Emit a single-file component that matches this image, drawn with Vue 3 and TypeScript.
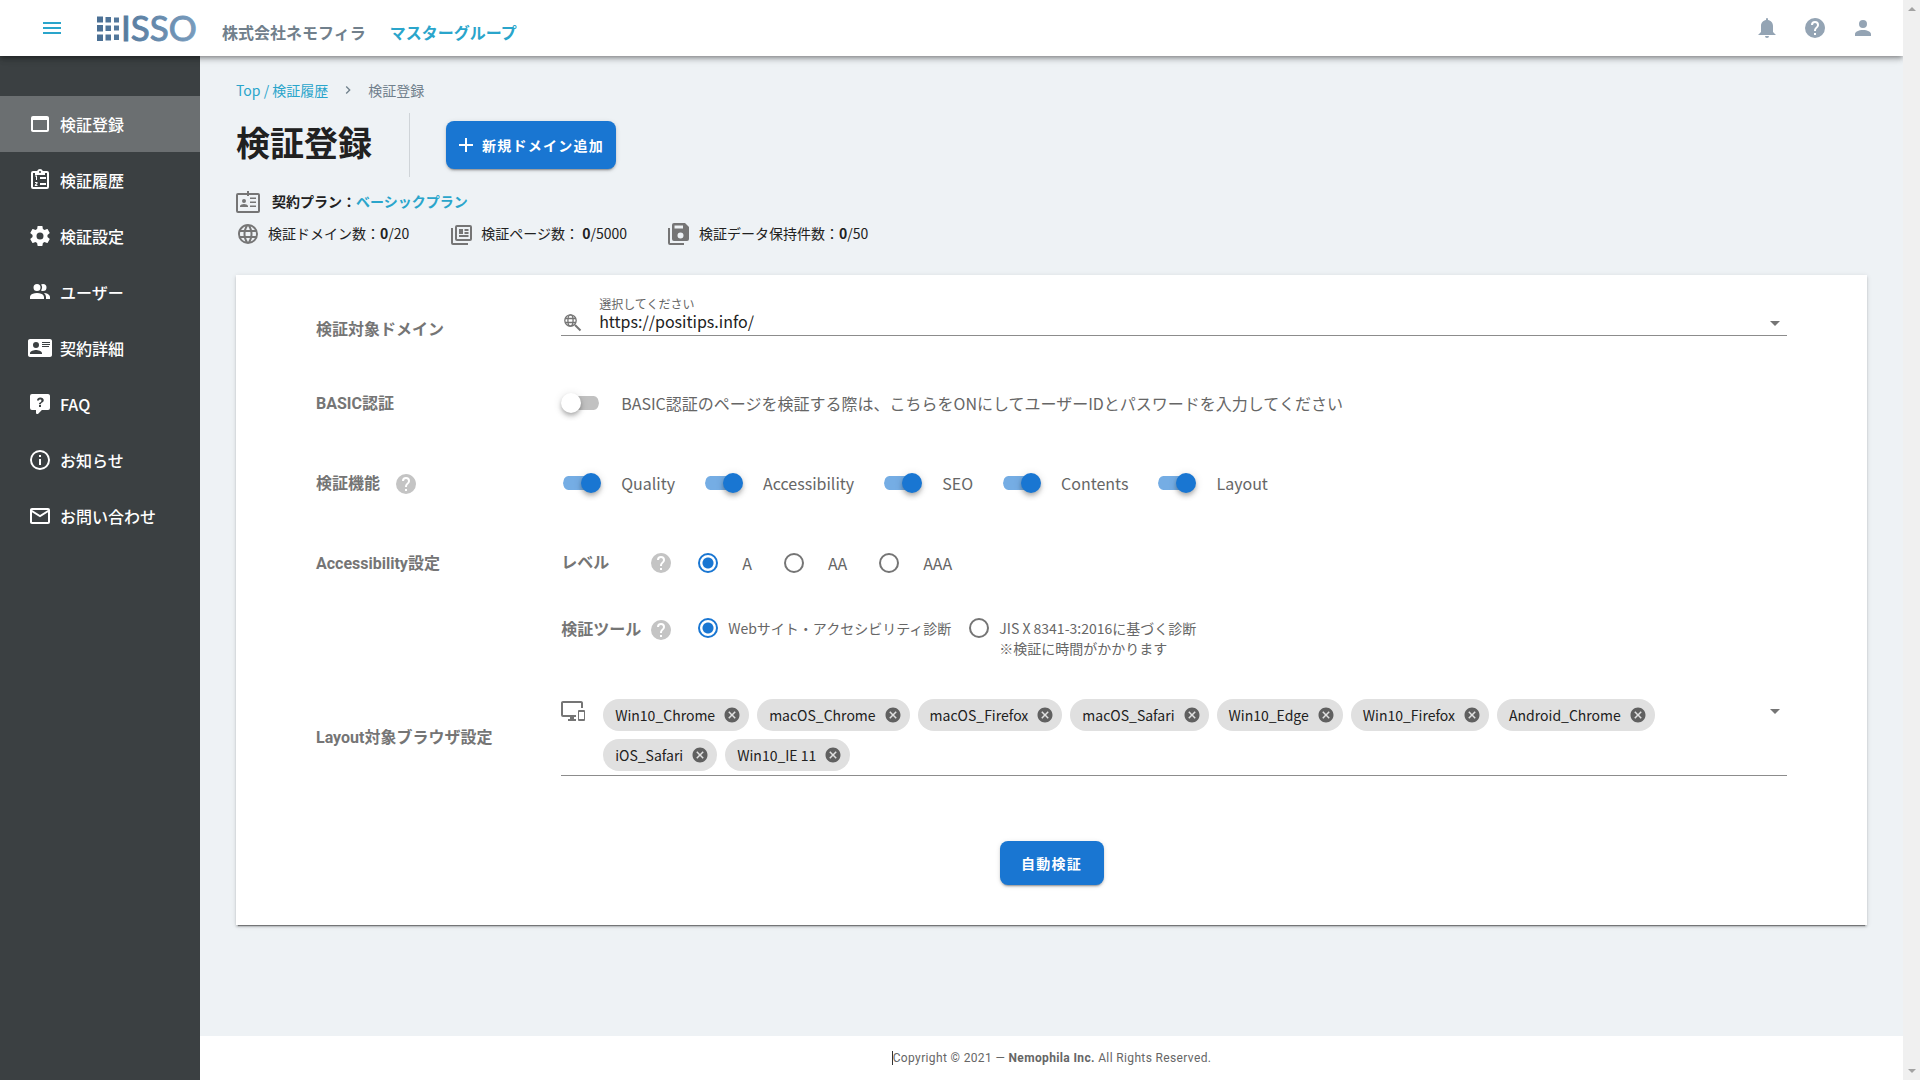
<script setup lang="ts">
import { ref } from 'vue'

interface NavItem {
  label: string
  icon: string
}

const navItems: NavItem[] = [
  { label: '検証登録', icon: 'M19,4C20.11,4 21,4.9 21,6V18A2,2 0 0,1 19,20H5C3.89,20 3,19.1 3,18V6A2,2 0 0,1 5,4H19M19,18V8H5V18H19Z' },
  { label: '検証履歴', icon: 'M19,3H14.82C14.4,1.84 13.3,1 12,1C10.7,1 9.6,1.84 9.18,3H5A2,2 0 0,0 3,5V19A2,2 0 0,0 5,21H19A2,2 0 0,0 21,19V5A2,2 0 0,0 19,3M12,3A1,1 0 1,1 12,5A1,1 0 0,1 12,3M19,19H5V5H7V7H17V5H19V19M12,9H18V11H12V9M12,15H18V17H12V15M8,12V8.5H7V7.5H9V12H8M7,14H9.5V15.5L8.2,17H9.5V18H6.8V17L8.5,15H7V14Z' },
  { label: '検証設定', icon: 'M12,15.5A3.5,3.5 0 0,1 8.5,12A3.5,3.5 0 0,1 12,8.5A3.5,3.5 0 0,1 15.5,12A3.5,3.5 0 0,1 12,15.5M19.43,12.97C19.47,12.65 19.5,12.33 19.5,12C19.5,11.67 19.47,11.34 19.43,11L21.54,9.37C21.73,9.22 21.78,8.95 21.66,8.73L19.66,5.27C19.54,5.05 19.27,4.96 19.05,5.05L16.56,6.05C16.04,5.66 15.5,5.32 14.87,5.07L14.5,2.42C14.46,2.18 14.25,2 14,2H10C9.75,2 9.54,2.18 9.5,2.42L9.13,5.07C8.5,5.32 7.96,5.66 7.44,6.05L4.95,5.05C4.73,4.96 4.46,5.05 4.34,5.27L2.34,8.73C2.21,8.95 2.27,9.22 2.46,9.37L4.57,11C4.53,11.34 4.5,11.67 4.5,12C4.5,12.33 4.53,12.65 4.57,12.97L2.46,14.63C2.27,14.78 2.21,15.05 2.34,15.27L4.34,18.73C4.46,18.95 4.73,19.03 4.95,18.95L7.44,17.94C7.96,18.34 8.5,18.68 9.13,18.93L9.5,21.58C9.54,21.82 9.75,22 10,22H14C14.25,22 14.46,21.82 14.5,21.58L14.87,18.93C15.5,18.67 16.04,18.34 16.56,17.94L19.05,18.95C19.27,19.03 19.54,18.95 19.66,18.73L21.66,15.27C21.78,15.05 21.73,14.78 21.54,14.63L19.43,12.97Z' },
  { label: 'ユーザー', icon: 'M16 17V19H2V17S2 13 9 13 16 17 16 17M12.5 7.5A3.5 3.5 0 1 0 9 11A3.5 3.5 0 0 0 12.5 7.5M15.94 13A5.32 5.32 0 0 1 18 17V19H22V17S22 13.37 15.94 13M15 4A3.39 3.39 0 0 0 13.07 4.59A5 5 0 0 1 13.07 10.41A3.39 3.39 0 0 0 15 11A3.5 3.5 0 0 0 15 4Z' },
  { label: '契約詳細', icon: 'M2,3H22C23.05,3 24,3.95 24,5V19C24,20.05 23.05,21 22,21H2C0.95,21 0,20.05 0,19V5C0,3.95 0.95,3 2,3M14,6V7H22V6H14M14,8V9H21.5L22,9V8H14M14,10V11H21V10H14M8,13.91C6,13.91 2,15 2,17V18H14V17C14,15 10,13.91 8,13.91M8,6A3,3 0 0,0 5,9A3,3 0 0,0 8,12A3,3 0 0,0 11,9A3,3 0 0,0 8,6Z' },
  { label: 'FAQ', icon: 'M4,2A2,2 0 0,0 2,4V16A2,2 0 0,0 4,18H8V21A1,1 0 0,0 9,22H9.5V22C9.75,22 10,21.9 10.2,21.71L13.9,18H20A2,2 0 0,0 22,16V4C22,2.89 21.1,2 20,2H4M12.19,5.5C13.3,5.5 14.18,5.75 14.81,6.26C15.44,6.76 15.75,7.44 15.75,8.29C15.75,8.83 15.57,9.33 15.2,9.79C14.84,10.25 14.37,10.61 13.79,10.87C13.46,11.06 13.24,11.25 13.13,11.45C13.02,11.65 12.96,11.9 12.96,12.2H10.96C10.96,11.67 11.07,11.3 11.27,11.06C11.48,10.83 11.85,10.55 12.4,10.23C12.72,10.06 12.97,9.8 13.15,9.5C13.31,9.25 13.39,8.95 13.39,8.61C13.39,8.26 13.28,8 13.08,7.77C12.87,7.58 12.58,7.5 12.2,7.5C11.88,7.5 11.6,7.57 11.37,7.74C11.15,7.91 11,8.16 11,8.5H9.04C8.96,7.53 9.3,6.77 10,6.25C10.5,5.75 11.29,5.5 12.19,5.5M11,13H13V15H11V13Z' },
  { label: 'お知らせ', icon: 'M11,9H13V7H11M12,20C7.59,20 4,16.41 4,12C4,7.59 7.59,4 12,4C16.41,4 20,7.59 20,12C20,16.41 16.41,20 12,20M12,2A10,10 0 0,0 2,12A10,10 0 0,0 12,22A10,10 0 0,0 22,12A10,10 0 0,0 12,2M11,17H13V11H11V17Z' },
  { label: 'お問い合わせ', icon: 'M4,4H20A2,2 0 0,1 22,6V18A2,2 0 0,1 20,20H4C2.89,20 2,19.1 2,18V6C2,4.89 2.89,4 4,4M12,11L20,6H4L12,11M4,18H20V8.37L12,13.36L4,8.37V18Z' },
]
const activeNav = ref(0)

const iconHelp =
  'M15.07,11.25L14.17,12.17C13.45,12.89 13,13.5 13,15H11V14.5C11,13.39 11.45,12.39 12.17,11.67L13.41,10.41C13.78,10.05 14,9.55 14,9C14,7.89 13.1,7 12,7A2,2 0 0,0 10,9H8A4,4 0 0,1 12,5A4,4 0 0,1 16,9C16,9.88 15.64,10.67 15.07,11.25M13,19H11V17H13M12,2A10,10 0 0,0 2,12A10,10 0 0,0 12,22A10,10 0 0,0 22,12C22,6.47 17.5,2 12,2Z'
const iconClose =
  'M12,2C17.53,2 22,6.47 22,12C22,17.53 17.53,22 12,22C6.47,22 2,17.53 2,12C2,6.47 6.47,2 12,2M15.59,7L12,10.59L8.41,7L7,8.41L10.59,12L7,15.59L8.41,17L12,13.41L15.59,17L17,15.59L13.41,12L17,8.41L15.59,7Z'

const domain = ref('https://positips.info/')
const basicAuth = ref(false)
const features = ref([
  { name: 'Quality', on: true },
  { name: 'Accessibility', on: true },
  { name: 'SEO', on: true },
  { name: 'Contents', on: true },
  { name: 'Layout', on: true },
])
const levels = ['A', 'AA', 'AAA']
const level = ref('A')
const tool = ref('web')
const browsers = ref([
  'Win10_Chrome', 'macOS_Chrome', 'macOS_Firefox', 'macOS_Safari', 'Win10_Edge',
  'Win10_Firefox', 'Android_Chrome', 'iOS_Safari', 'Win10_IE 11',
])

function removeBrowser(name: string) {
  browsers.value = browsers.value.filter((b) => b !== name)
}
</script>

<template>
  <div class="window">
    <div class="app">
      <header class="topbar">
        <button class="icon-btn menu" type="button" aria-label="メニュー">
          <svg viewBox="0 0 24 24"><path d="M3,6H21V8H3V6M3,11H21V13H3V11M3,16H21V18H3V16Z" /></svg>
        </button>
        <svg class="logo" viewBox="0 -8 104 48" role="img" aria-label="ISSO">
          <defs>
            <linearGradient id="brand" gradientUnits="userSpaceOnUse" x1="0" y1="0" x2="102" y2="0">
              <stop offset="0" stop-color="#4a6f94" />
              <stop offset="1" stop-color="#7a9dbe" />
            </linearGradient>
          </defs>
          <g fill="url(#brand)">
            <path d="M0,4.500h6v6h-6zM8.500,5h5.500v5.500h-5.500zM17,5.500h5v5h-5zM0,13h6v6.500h-6zM8.500,13.500h5.500v5.500h-5.500zM17,13.500h5v5h-5zM0,22.500h6v6.500h-6zM8.500,22.500h5.500v6h-5.500zM17,22.500h5v5.500h-5z" />
            <text class="logo-text" x="24" y="29" stroke="url(#brand)">ISSO</text>
          </g>
        </svg>
        <div class="names">
          <span class="company">株式会社ネモフィラ</span>
          <span class="group">マスターグループ</span>
        </div>
        <div class="tools">
          <button class="icon-btn" type="button" aria-label="通知">
            <svg viewBox="0 0 24 24"><path d="M14,20A2,2 0 0,1 12,22A2,2 0 0,1 10,20H14M12,2A1,1 0 0,1 13,3V4.08C15.84,4.56 18,7.03 18,10V16L21,19H3L6,16V10C6,7.03 8.16,4.56 11,4.08V3A1,1 0 0,1 12,2Z" /></svg>
          </button>
          <button class="icon-btn" type="button" aria-label="ヘルプ">
            <svg viewBox="0 0 24 24"><path :d="iconHelp" /></svg>
          </button>
          <button class="icon-btn" type="button" aria-label="アカウント">
            <svg viewBox="0 0 24 24"><path d="M12,4A4,4 0 0,1 16,8A4,4 0 0,1 12,12A4,4 0 0,1 8,8A4,4 0 0,1 12,4M12,14C16.42,14 20,15.79 20,18V20H4V18C4,15.79 7.58,14 12,14Z" /></svg>
          </button>
        </div>
      </header>

      <div class="body">
        <nav class="sidebar">
          <a
            v-for="(item, i) in navItems"
            :key="item.label"
            href="#"
            class="nav-item"
            :class="{ active: i === activeNav }"
            @click.prevent="activeNav = i"
          >
            <svg viewBox="0 0 24 24"><path :d="item.icon" /></svg>
            <span>{{ item.label }}</span>
          </a>
        </nav>

        <div class="content">
          <main class="main">
            <div class="crumbs">
              <a href="#">Top / 検証履歴</a>
              <svg viewBox="0 0 24 24"><path d="M8.59,16.58L13.17,12L8.59,7.41L10,6L16,12L10,18L8.59,16.58Z" /></svg>
              <span>検証登録</span>
            </div>

            <div class="heading">
              <h1>検証登録</h1>
              <button class="primary add" type="button">
                <svg viewBox="0 0 24 24"><path d="M19,13H13V19H11V13H5V11H11V5H13V11H19V13Z" /></svg>
                <span>新規ドメイン追加</span>
              </button>
            </div>

            <div class="plan">
              <svg viewBox="0 0 24 24"><path d="M22,3H13V1H11V3H2A2,2 0 0,0 0,5V21A2,2 0 0,0 2,23H22A2,2 0 0,0 24,21V5A2,2 0 0,0 22,3M22,21H2V5H11V6H13V5H22V21M14,17V15.500H20V17H14M14,13V11.500H20V13H14M14,9V7.500H20V9H14M8,9A2,2 0 0,1 10,11A2,2 0 0,1 8,13A2,2 0 0,1 6,11A2,2 0 0,1 8,9M12,17V16C12,14.700 9.300,14 8,14C6.700,14 4,14.700 4,16V17H12Z" /></svg>
              <div class="plan-text">
                <span>契約プラン：</span>
                <a href="#">ベーシックプラン</a>
              </div>
            </div>
            <div class="stats">
              <div class="stat">
                <svg viewBox="0 0 24 24"><path d="M16.36,14C16.44,13.34 16.5,12.68 16.5,12C16.5,11.32 16.44,10.66 16.36,10H19.74C19.9,10.64 20,11.31 20,12C20,12.69 19.9,13.36 19.74,14M14.59,19.56C15.19,18.45 15.65,17.25 15.97,16H18.92C17.96,17.65 16.43,18.93 14.59,19.56M14.34,14H9.66C9.56,13.34 9.5,12.68 9.5,12C9.5,11.32 9.56,10.65 9.66,10H14.34C14.43,10.65 14.5,11.32 14.5,12C14.5,12.68 14.43,13.34 14.34,14M12,19.96C11.17,18.76 10.5,17.43 10.09,16H13.91C13.5,17.43 12.83,18.76 12,19.96M8,8H5.08C6.03,6.34 7.57,5.06 9.4,4.44C8.8,5.55 8.35,6.75 8,8M5.08,16H8C8.35,17.25 8.8,18.45 9.4,19.56C7.57,18.93 6.03,17.65 5.08,16M4.26,14C4.1,13.36 4,12.69 4,12C4,11.31 4.1,10.64 4.26,10H7.64C7.56,10.66 7.5,11.32 7.5,12C7.5,12.68 7.56,13.34 7.64,14M12,4.03C12.83,5.23 13.5,6.57 13.91,8H10.09C10.5,6.57 11.17,5.23 12,4.03M18.92,8H15.97C15.65,6.75 15.19,5.55 14.59,4.44C16.43,5.07 17.96,6.34 18.92,8M12,2C6.47,2 2,6.5 2,12A10,10 0 0,0 12,22A10,10 0 0,0 22,12A10,10 0 0,0 12,2Z" /></svg>
                <span>検証ドメイン数：<b>0</b>/20</span>
              </div>
              <div class="stat">
                <svg viewBox="0 0 24 24"><path d="M21,3H8A2,2 0 0,0 6,5V17A2,2 0 0,0 8,19H21A2,2 0 0,0 23,17V5A2,2 0 0,0 21,3M21,17H8V5H21V17M2,6H4V21H19V23H4A2,2 0 0,1 2,21V6M10,7H14V12H10V7M15.500,7H19.500V9H15.500V7M15.500,10H19.500V12H15.500V10M10,13H19.500V15H10V13Z" /></svg>
                <span>検証ページ数： <b>0</b>/5000</span>
              </div>
              <div class="stat">
                <svg viewBox="0 0 24 24"><path d="M18,1H7A2,2 0 0,0 5,3V17A2,2 0 0,0 7,19H20A2,2 0 0,0 22,17V5L18,1M16,6.500H7.500V3.500H16V6.500M13.500,16.500A3,3 0 1,1 16.500,13.500A3,3 0 0,1 13.500,16.500M1,6H3V21H17V23H3A2,2 0 0,1 1,21V6Z" /></svg>
                <span>検証データ保持件数：<b>0</b>/50</span>
              </div>
            </div>

            <form class="card" @submit.prevent>
              <div class="row row-domain">
                <label class="row-label" for="domain">検証対象ドメイン</label>
                <div class="select-field">
                  <svg class="search-icon" viewBox="0 0 24 24">
                    <circle cx="9.500" cy="9.500" r="5.700" />
                    <ellipse cx="9.500" cy="9.500" rx="2.600" ry="5.700" />
                    <path d="M4.200,7.500H14.800M4.200,11.500H14.800" />
                    <path class="handle" d="M14,14L19.500,19.500" />
                  </svg>
                  <div class="select-stack">
                    <label class="hint" for="domain">選択してください</label>
                    <select id="domain" v-model="domain">
                      <option>https://positips.info/</option>
                    </select>
                  </div>
                  <svg class="arrow" viewBox="0 0 24 24"><path d="M7,10L12,15L17,10H7Z" /></svg>
                </div>
              </div>

              <div class="row">
                <span class="row-label">BASIC認証</span>
                <div class="options">
                  <label class="switch">
                    <input v-model="basicAuth" type="checkbox" />
                    <span>BASIC認証のページを検証する際は、こちらをONにしてユーザーIDとパスワードを入力してください</span>
                  </label>
                </div>
              </div>

              <div class="row">
                <span class="row-label">検証機能 <svg class="help" viewBox="0 0 24 24"><path :d="iconHelp" /></svg></span>
                <div class="options">
                  <label v-for="f in features" :key="f.name" class="switch">
                    <input v-model="f.on" type="checkbox" />
                    <span>{{ f.name }}</span>
                  </label>
                </div>
              </div>

              <div class="row">
                <span class="row-label">Accessibility設定</span>
                <div class="options">
                  <span class="sub-label">レベル</span>
                  <svg class="help" viewBox="0 0 24 24"><path :d="iconHelp" /></svg>
                  <label v-for="l in levels" :key="l" class="radio">
                    <input v-model="level" type="radio" name="level" :value="l" />
                    <span>{{ l }}</span>
                  </label>
                </div>
              </div>

              <div class="row row-tool">
                <span></span>
                <div class="options tool">
                  <span class="sub-label">検証ツール</span>
                  <svg class="help" viewBox="0 0 24 24"><path :d="iconHelp" /></svg>
                  <label class="radio">
                    <input v-model="tool" type="radio" name="tool" value="web" />
                    <span>Webサイト・アクセシビリティ診断</span>
                  </label>
                  <label class="radio">
                    <input v-model="tool" type="radio" name="tool" value="jis" />
                    <span>JIS X 8341-3:2016に基づく診断<br />※検証に時間がかかります</span>
                  </label>
                </div>
              </div>

              <div class="row row-layout">
                <span class="row-label">Layout対象ブラウザ設定</span>
                <div class="chips-field">
                  <svg class="devices" viewBox="0 0 24 24"><path d="M23,11H18A1,1 0 0,0 17,12V21A1,1 0 0,0 18,22H23A1,1 0 0,0 24,21V12A1,1 0 0,0 23,11M23,20H18V13H23V20M20,2H2C0.89,2 0,2.89 0,4V16A2,2 0 0,0 2,18H9V20H7V22H15V20H13V18H15V16H2V4H20V9H22V4C22,2.89 21.1,2 20,2Z" /></svg>
                  <ul class="chips">
                    <li v-for="b in browsers" :key="b" class="chip">
                      <span>{{ b }}</span>
                      <button type="button" :aria-label="b + 'を削除'" @click="removeBrowser(b)">
                        <svg viewBox="0 0 24 24"><path :d="iconClose" /></svg>
                      </button>
                    </li>
                  </ul>
                  <svg class="arrow" viewBox="0 0 24 24"><path d="M7,10L12,15L17,10H7Z" /></svg>
                </div>
              </div>

              <button class="primary submit" type="submit">自動検証</button>
            </form>
          </main>

          <footer class="footer">
            <span class="copyright">Copyright © 2021 — <b>Nemophila Inc.</b> All Rights Reserved.</span>
          </footer>
        </div>
      </div>
    </div>

    <div class="scrollbar" aria-hidden="true">
      <svg viewBox="0 0 8 4"><path d="M4,0L8,4H0Z" /></svg>
      <svg viewBox="0 0 8 4"><path d="M0,0H8L4,4Z" /></svg>
    </div>
  </div>
</template>

<style>
html {
  scrollbar-width: none;
}
body {
  margin: 0;
}
</style>

<style scoped>
* {
  box-sizing: border-box;
}
.window {
  display: flex;
  min-height: 100vh;
  font-family: "Noto Sans CJK JP", sans-serif;
  font-size: 16px;
  line-height: 24px;
  color: #212121;
}
.app {
  flex: 1;
  min-width: 0;
  display: flex;
  flex-direction: column;
}
svg {
  display: block;
  flex: none;
  width: 24px;
  height: 24px;
  fill: currentColor;
}
a {
  color: #2aa5cb;
  text-decoration: none;
}
button {
  border: 0;
  padding: 0;
  background: none;
  font: inherit;
  cursor: pointer;
}

/* header */
.topbar {
  position: relative;
  z-index: 1;
  display: flex;
  align-items: center;
  height: 56px;
  padding: 0 28px 0 40px;
  background: #fff;
  box-shadow: 0 2px 4px -1px rgba(0, 0, 0, 0.3), 0 4px 5px rgba(0, 0, 0, 0.14), 0 1px 10px rgba(0, 0, 0, 0.12);
}
.icon-btn {
  color: #94a4b4;
}
.menu {
  color: #2aa5cb;
}
.logo {
  width: 104px;
  height: 48px;
  margin: 0 21px 0 33px;
}
.logo-text {
  font-family: Lato, sans-serif;
  font-size: 35px;
}
.names {
  display: flex;
  gap: 24px;
  padding-top: 8px;
  font-weight: 700;
}
.company {
  color: #71808c;
}
.group {
  color: #2aa5cb;
}
.tools {
  display: flex;
  gap: 24px;
  margin-left: auto;
}

.body {
  flex: 1;
  display: flex;
}

/* sidebar */
.sidebar {
  width: 200px;
  padding-top: 40px;
  background: #3b4042;
}
.nav-item {
  display: flex;
  align-items: center;
  gap: 8px;
  height: 56px;
  padding-left: 28px;
  color: #fff;
  font-weight: 500;
}
.nav-item.active {
  background: #6b6f71;
}

/* page */
.content {
  flex: 1;
  min-width: 0;
  display: flex;
  flex-direction: column;
  background: #eef2f5;
}
.main {
  flex: 1;
  padding: 22px 36px 36px;
}
.crumbs {
  display: flex;
  align-items: center;
  gap: 12px;
  font-size: 14px;
  color: #71808c;
}
.crumbs svg {
  width: 16px;
  height: 16px;
}
.heading {
  display: flex;
  align-items: center;
  height: 64px;
  margin-top: 11px;
}
h1 {
  height: 64px;
  margin: 0 36px 0 0;
  padding-right: 37px;
  border-right: 1px solid #cfd4d8;
  font-size: 34px;
  line-height: 58px;
  font-weight: 700;
}
.primary {
  display: flex;
  align-items: center;
  justify-content: center;
  border-radius: 8px;
  background: #1976d2;
  color: #fff;
  font-size: 14px;
  font-weight: 700;
  letter-spacing: 0.09em;
  box-shadow: 0 3px 1px -2px rgba(0, 0, 0, 0.2), 0 2px 2px rgba(0, 0, 0, 0.14), 0 1px 5px rgba(0, 0, 0, 0.12);
}
.add {
  height: 48px;
  padding: 0 12px 0 8px;
  gap: 4px;
}
.plan,
.stats,
.stat {
  display: flex;
  align-items: center;
  height: 32px;
  font-size: 14px;
}
.plan {
  gap: 12px;
  margin-top: 9px;
  font-weight: 700;
}
.plan-text,
.stat span {
  padding-bottom: 2px;
}
.plan svg,
.stat svg {
  color: #757575;
}
.stats {
  gap: 40px;
}
.stat {
  gap: 8px;
}

/* form */
.card {
  margin-top: 25px;
  padding: 20px 80px 40px;
  background: #fff;
  box-shadow: 0 3px 1px -2px rgba(0, 0, 0, 0.4), 0 2px 2px rgba(0, 0, 0, 0.14), 0 1px 5px rgba(0, 0, 0, 0.12);
}
.row {
  display: grid;
  grid-template-columns: 2fr 10fr;
  align-items: center;
  min-height: 80px;
  color: #666;
}
.row-label,
.sub-label {
  color: #757575;
  font-family: Roboto, "Noto Sans CJK JP", sans-serif;
  font-weight: 700;
}
.row-label {
  display: flex;
  align-items: center;
  gap: 14px;
  padding-top: 1px;
}
.help {
  color: #c4c4c4;
}
.row-domain {
  min-height: 68px;
}
.select-field {
  align-self: start;
  display: flex;
  align-items: flex-end;
  gap: 14px;
  border-bottom: 1px solid #8c8c8c;
}
.search-icon {
  color: #757575;
  fill: none;
  stroke: currentColor;
  stroke-width: 1.3;
}
.handle {
  stroke-width: 2;
}
.select-stack {
  flex: 1;
  display: flex;
  flex-direction: column;
  padding-bottom: 2px;
}
.hint {
  font-size: 12px;
  line-height: 18px;
}
select {
  appearance: none;
  height: 24px;
  margin: -4px 0 0;
  padding: 0;
  border: 0;
  background: none;
  color: #212121;
  font: inherit;
  line-height: 24px;
}
.arrow {
  color: #757575;
}
.options {
  display: flex;
  align-items: center;
}
.switch {
  display: flex;
  align-items: center;
  gap: 20px;
  margin-right: 28px;
}
.switch input {
  appearance: none;
  display: flex;
  align-items: center;
  width: 40px;
  height: 14px;
  margin: 0;
  border: solid #fff;
  border-width: 0 2px;
  border-radius: 8px;
  background: #c1c1c1;
  background-clip: padding-box;
}
.switch input::before {
  content: "";
  width: 20px;
  height: 20px;
  margin: 0 -2px;
  border-radius: 50%;
  background: #fff;
  box-shadow: 0 2px 4px -1px rgba(0, 0, 0, 0.2), 0 4px 5px rgba(0, 0, 0, 0.14), 0 1px 10px rgba(0, 0, 0, 0.12);
}
.switch input:checked {
  justify-content: flex-end;
  background-color: #75ade4;
}
.switch input:checked::before {
  background: #1976d2;
}
.sub-label {
  width: 88px;
}
.radio {
  display: flex;
  align-items: center;
  gap: 24px;
  margin-right: 32px;
}
.radio input {
  appearance: none;
  flex: none;
  width: 20px;
  height: 20px;
  margin: 0;
  border: 2px solid #757575;
  border-radius: 50%;
}
.radio input:checked {
  border: 2px solid #1976d2;
  background: radial-gradient(circle, #1976d2 5px, transparent 6px);
}
.options .help {
  margin-right: 25px;
}
.row-tool {
  min-height: 96px;
  padding-top: 15px;
  align-items: start;
}
.tool {
  align-items: flex-start;
}
.tool .radio {
  align-items: flex-start;
  gap: 10px;
  margin-right: 18px;
  font-size: 14px;
  line-height: 20px;
}
.row-layout {
  min-height: 77px;
}
.chips-field {
  display: flex;
  align-items: flex-start;
  border-bottom: 1px solid #8c8c8c;
}
.devices {
  margin-right: 18px;
  color: #757575;
}
.chips {
  flex: 1;
  display: flex;
  flex-wrap: wrap;
  gap: 8px;
  margin: 0;
  padding: 0 0 4px;
  list-style: none;
}
.chip {
  display: flex;
  align-items: center;
  gap: 8px;
  height: 32px;
  padding: 0 8px 0 12px;
  border-radius: 16px;
  background: #e0e0e0;
  color: #212121;
  font-size: 14px;
}
.chip svg {
  width: 18px;
  height: 18px;
  color: #606060;
}
.submit {
  width: 104px;
  height: 44px;
  margin: 65px auto 0;
}

.footer {
  display: flex;
  align-items: center;
  justify-content: center;
  height: 44px;
  background: #fff;
}
.copyright {
  border-left: 1px solid #333;
  color: #666;
  font-family: Roboto, sans-serif;
  font-size: 12px;
  line-height: 14px;
  letter-spacing: 0.03em;
}

/* scroll gutter */
.scrollbar {
  position: relative;
  z-index: 2;
  display: flex;
  flex-direction: column;
  align-items: center;
  justify-content: space-between;
  width: 17px;
  padding: 7px 0;
  background: #f0f0f0;
  color: #a3a3a3;
}
.scrollbar svg {
  width: 8px;
  height: 4px;
}
</style>
